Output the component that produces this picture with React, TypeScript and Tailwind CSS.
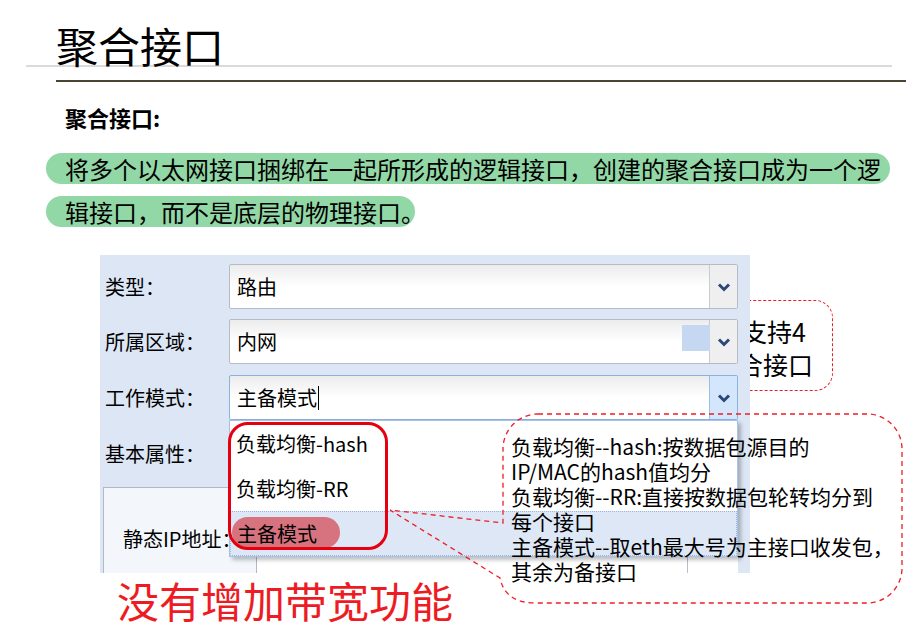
import React from 'react';

const Chevron = () => (
  <svg width="14" height="10" viewBox="0 0 14 10">
    <path d="M2 2.5 L7 7.5 L12 2.5" fill="none" stroke="#2c4878" strokeWidth="3" />
  </svg>
);

interface SelectProps {
  value: string;
  focused?: boolean;
  cursor?: boolean;
  marker?: boolean;
}

const Select: React.FC<SelectProps> = ({ value, focused, cursor, marker }) => (
  <div
    className={`relative flex h-[45px] w-[509px] rounded-[2px] border bg-gradient-to-b from-[#ececec] via-white to-white ${
      focused ? 'border-[#8db0dc]' : 'border-[#b7bbc6]'
    }`}
  >
    <div className="flex flex-1 items-center pl-[7px] text-[20px] text-black">
      {value}
      {cursor && <span className="ml-[1px] inline-block h-[24px] w-[1px] bg-black" />}
    </div>
    {marker && <div className="absolute right-[27px] top-[5px] h-[26px] w-[28px] bg-[#c6d7f1]" />}
    <div
      className={`flex w-[28px] items-center justify-center border-l ${
        focused ? 'border-[#9dbde6] bg-[#d4e6fb]' : 'border-[#c8cbd3] bg-[#efefef]'
      }`}
    >
      <Chevron />
    </div>
  </div>
);

const rows = [
  { label: '类型：', value: '路由' },
  { label: '所属区域：', value: '内网', marker: true },
  { label: '工作模式：', value: '主备模式', focused: true, cursor: true },
];

export default function App() {
  return (
    <div className="relative h-[643px] w-[923px] overflow-hidden bg-white font-['Noto_Sans_CJK_SC','Noto_Sans',sans-serif] text-black">
      {/* title */}
      <div className="absolute left-[26px] top-[65px] h-[2px] w-[866px] bg-[#dadada]" />
      <div className="relative ml-[56px] mr-[17px] h-[82px] border-b-2 border-[#4a4232]">
        <div className="pt-[21px] text-[42px] leading-[48px] font-normal">聚合接口</div>
      </div>

      <div className="ml-[65px] mt-[20px] text-[22px] font-bold leading-[30px]">聚合接口:</div>

      <div className="ml-[46px] mt-[21px] flex flex-col gap-[12px]">
        <div className="flex h-[31px] w-[844px] items-center whitespace-nowrap rounded-full bg-[#92d7a6] pl-[19px] text-[24px]">
          将多个以太网接口捆绑在一起所形成的逻辑接口，创建的聚合接口成为一个逻
        </div>
        <div className="flex h-[31px] w-[369px] items-center whitespace-nowrap rounded-full bg-[#92d7a6] pl-[19px] text-[24px]">
          辑接口，而不是底层的物理接口。
        </div>
      </div>

      {/* callout behind the panel */}
      <div className="absolute left-[620px] top-[300px] h-[91px] w-[213px] rounded-[18px] border-[1.5px] border-dashed border-[#ee1c25]">
        <div className="flex flex-col items-end pt-[14px] text-[25px] leading-[33px]">
          <div className="pr-[26px]">最多支持4</div>
          <div className="pr-[19px]">个聚合接口</div>
        </div>
      </div>

      {/* embedded form screenshot */}
      <div className="relative z-10 ml-[100px] mt-[28px] h-[318px] w-[650px] bg-[#dce6f4]">
        <div className="flex flex-col pt-[9px]">
          {rows.map((r, i) => (
            <div key={r.label} className={`flex h-[45px] items-center ${i === 1 ? 'mt-[10px]' : i === 2 ? 'mt-[11px]' : ''}`}>
              <div className="w-[129px] pl-[5px] text-[20px]">{r.label}</div>
              <Select value={r.value} focused={r.focused} cursor={r.cursor} marker={r.marker} />
            </div>
          ))}
          <div className="mt-[11px] flex h-[45px] items-center">
            <div className="w-[129px] pl-[5px] text-[20px]">基本属性：</div>
          </div>
          <div className="mt-[11px] ml-[3px] h-[86px] w-[154px] border-l border-t border-r border-[#b2b8c4] bg-[#f3f6fb] pl-[19px] pt-[36px] text-[20px] whitespace-nowrap">
            静态IP地址：
          </div>
        </div>

        <div className="absolute left-[157px] top-[302px] h-[16px] w-[481px] bg-white">
          <div className="absolute left-[430px] top-0 h-full w-[1px] bg-[#b9bec8]" />
        </div>

        {/* dropdown list */}
        <div className="absolute left-[129px] top-[165px] h-[137px] w-[509px] border border-[#a9c3e7] bg-white shadow-[3px_3px_4px_rgba(0,0,0,0.25)]">
          <div className="flex h-[45px] items-center pl-[6px] text-[20px]">负载均衡-hash</div>
          <div className="flex h-[45px] items-center pl-[6px] text-[20px]">负载均衡-RR</div>
          <div className="relative flex h-[45px] items-center border border-dotted border-[#9ab6e0] bg-[#dde7f5] pl-[6px] text-[20px]">
            <div className="absolute left-[1px] top-[5px] h-[31px] w-[108px] rounded-full bg-[#d6737e]" />
            <span className="relative">主备模式</span>
          </div>
        </div>
        <div className="absolute left-[128px] top-[167px] h-[128px] w-[160px] rounded-[20px] border-[3px] border-[#e6000f]" />
      </div>

      <div className="ml-[117px] mt-[3px] text-[42px] leading-[48px] text-[#ed1c24]">没有增加带宽功能</div>

      {/* callout over the panel */}
      <svg className="absolute left-0 top-0 z-20" width="923" height="643" viewBox="0 0 923 643">
        <path
          d="M538 414 H867 A35 35 0 0 1 902 449 V568 A35 35 0 0 1 867 603 H536 Q505 603 500 578 L390 510 L503 523 V449 A35 35 0 0 1 538 414 Z"
          fill="none"
          stroke="#ee1c25"
          strokeWidth="1.3"
          strokeDasharray="5 4"
        />
      </svg>
      <div className="absolute left-[511px] top-[434px] z-20 text-[21px] leading-[25px] whitespace-nowrap">
        <div>负载均衡--hash:按数据包源目的</div>
        <div>IP/MAC的hash值均分</div>
        <div>负载均衡--RR:直接按数据包轮转均分到</div>
        <div>每个接口</div>
        <div>主备模式--取eth最大号为主接口收发包，</div>
        <div>其余为备接口</div>
      </div>
    </div>
  );
}
